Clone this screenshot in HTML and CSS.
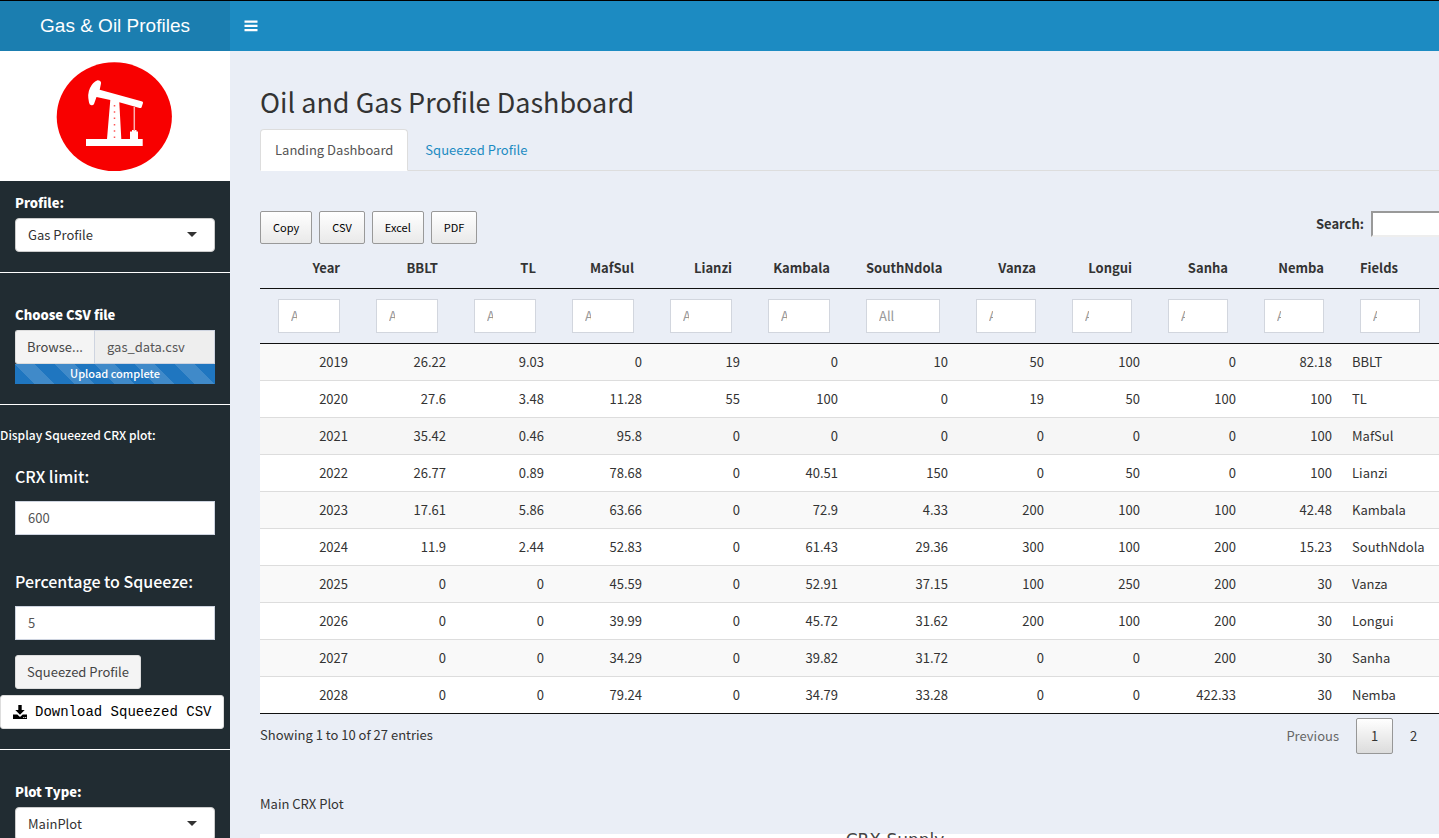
FILE: index.html
```html
<!DOCTYPE html>
<html lang="en">
<head>
<meta charset="utf-8">
<title>Gas &amp; Oil Profiles</title>
<link rel="stylesheet" href="styles.css">
</head>
<body>
<header class="header">
  <div class="brand">Gas &amp; Oil Profiles</div>
  <nav class="navbar">
    <button class="menu-toggle" type="button" aria-label="Toggle navigation">
      <svg width="14" height="12" viewBox="0 0 14 12"><path d="M0.500 0.500h13v2.300h-13zM0.500 4.800h13v2.300h-13zM0.500 9h13v2.300h-13z" fill="#fff"/></svg>
    </button>
  </nav>
</header>
<div class="shell">
  <aside class="sidebar">
    <div class="logo">
      <svg width="230" height="130" viewBox="0 0 230 130" role="img" aria-label="Oil pump">
        <ellipse cx="114.3" cy="65.7" rx="57.6" ry="54.4" fill="#f80000"/>
        <g fill="#fff">
          <path d="M97.500 29.300Q101.500 29.500 101 32.500L99.700 38.700L142.300 50.500Q143.300 51 143 52L141.600 56.200Q141 57.400 139.600 57L119.300 51.200L121.300 88H142.700V95H86V88H107L110.300 49L96.500 46L94 53Q93.200 54.400 91.500 54.200Q89.400 54 89 51.500Q87 43 90 37Q92.500 31.500 97.500 29.300Z"/>
          <path d="M132 79h4.500v1.500h1.500V89h-8v-8.500h2z"/>
        </g>
        <path d="M134.300 56v24" stroke="#fcb0b0" stroke-width="1.500"/>
        <path d="M114.500 54v35" stroke="#f55" stroke-width="1.500" stroke-dasharray="1.500 4.800"/>
      </svg>
    </div>
    <section class="panel">
      <div class="field">
        <label for="profile">Profile:</label>
        <div class="select"><select id="profile"><option>Gas Profile</option></select></div>
      </div>
    </section>
    <section class="panel panel-lower">
      <div class="field">
        <label for="csv">Choose CSV file</label>
        <div class="file">
          <button type="button" class="browse">Browse...</button>
          <input id="csv" type="text" value="gas_data.csv" readonly>
        </div>
        <div class="progress">Upload complete</div>
      </div>
    </section>
    <section class="panel squeeze">
      <p class="note">Display Squeezed CRX plot:</p>
      <div class="field number">
        <label class="big" for="limit">CRX limit:</label>
        <input id="limit" type="text" value="600">
      </div>
      <div class="field number second">
        <label class="big" for="percent">Percentage to Squeeze:</label>
        <input id="percent" type="text" value="5">
        <button type="button" class="action">Squeezed Profile</button>
      </div>
      <button type="button" class="download">
        <svg width="14" height="14" viewBox="0 0 14 14"><path d="M5.300 0h3.400v5h3L7 9.700 2.300 5h3zM0 9.500h4.300L7 12l2.700-2.500H14V14H0zM10.300 12v1h1v-1zM12.200 12v1h1v-1z" fill="#000" fill-rule="evenodd"/></svg>
        Download Squeezed CSV
      </button>
    </section>
    <section class="panel panel-lower">
      <div class="field">
        <label for="plot">Plot Type:</label>
        <div class="select"><select id="plot"><option>MainPlot</option></select></div>
      </div>
    </section>
  </aside>
  <main class="content">
    <h1>Oil and Gas Profile Dashboard</h1>
    <nav class="tabs">
      <a class="tab active" href="#landing">Landing Dashboard</a>
      <a class="tab" href="#squeezed">Squeezed Profile</a>
    </nav>
    <div class="toolbar">
      <div class="exports">
        <button type="button">Copy</button>
        <button type="button">CSV</button>
        <button type="button">Excel</button>
        <button type="button">PDF</button>
      </div>
      <div class="search">
        <label for="search">Search:</label>
        <input id="search" type="search">
      </div>
    </div>
    <table class="data">
      <colgroup><col span="6" class="c-wide"><col class="c-south"><col span="4" class="c-mid"><col></colgroup>
      <thead>
        <tr><th>Year</th><th>BBLT</th><th>TL</th><th>MafSul</th><th>Lianzi</th><th>Kambala</th><th>SouthNdola</th><th>Vanza</th><th>Longui</th><th>Sanha</th><th>Nemba</th><th>Fields</th></tr>
        <tr class="filters">
          <td><input placeholder="All" aria-label="Filter Year"></td><td><input placeholder="All" aria-label="Filter BBLT"></td><td><input placeholder="All" aria-label="Filter TL"></td><td><input placeholder="All" aria-label="Filter MafSul"></td><td><input placeholder="All" aria-label="Filter Lianzi"></td><td><input placeholder="All" aria-label="Filter Kambala"></td><td><input placeholder="All" aria-label="Filter SouthNdola"></td><td><input placeholder="All" aria-label="Filter Vanza"></td><td><input placeholder="All" aria-label="Filter Longui"></td><td><input placeholder="All" aria-label="Filter Sanha"></td><td><input placeholder="All" aria-label="Filter Nemba"></td><td><input placeholder="All" aria-label="Filter Fields"></td>
        </tr>
      </thead>
      <tbody>
        <tr><td>2019</td><td>26.22</td><td>9.03</td><td>0</td><td>19</td><td>0</td><td>10</td><td>50</td><td>100</td><td>0</td><td>82.18</td><td>BBLT</td></tr>
        <tr><td>2020</td><td>27.6</td><td>3.48</td><td>11.28</td><td>55</td><td>100</td><td>0</td><td>19</td><td>50</td><td>100</td><td>100</td><td>TL</td></tr>
        <tr class="current"><td>2021</td><td>35.42</td><td>0.46</td><td>95.8</td><td>0</td><td>0</td><td>0</td><td>0</td><td>0</td><td>0</td><td>100</td><td>MafSul</td></tr>
        <tr><td>2022</td><td>26.77</td><td>0.89</td><td>78.68</td><td>0</td><td>40.51</td><td>150</td><td>0</td><td>50</td><td>0</td><td>100</td><td>Lianzi</td></tr>
        <tr><td>2023</td><td>17.61</td><td>5.86</td><td>63.66</td><td>0</td><td>72.9</td><td>4.33</td><td>200</td><td>100</td><td>100</td><td>42.48</td><td>Kambala</td></tr>
        <tr><td>2024</td><td>11.9</td><td>2.44</td><td>52.83</td><td>0</td><td>61.43</td><td>29.36</td><td>300</td><td>100</td><td>200</td><td>15.23</td><td>SouthNdola</td></tr>
        <tr><td>2025</td><td>0</td><td>0</td><td>45.59</td><td>0</td><td>52.91</td><td>37.15</td><td>100</td><td>250</td><td>200</td><td>30</td><td>Vanza</td></tr>
        <tr><td>2026</td><td>0</td><td>0</td><td>39.99</td><td>0</td><td>45.72</td><td>31.62</td><td>200</td><td>100</td><td>200</td><td>30</td><td>Longui</td></tr>
        <tr><td>2027</td><td>0</td><td>0</td><td>34.29</td><td>0</td><td>39.82</td><td>31.72</td><td>0</td><td>0</td><td>200</td><td>30</td><td>Sanha</td></tr>
        <tr><td>2028</td><td>0</td><td>0</td><td>79.24</td><td>0</td><td>34.79</td><td>33.28</td><td>0</td><td>0</td><td>422.33</td><td>30</td><td>Nemba</td></tr>
      </tbody>
    </table>
    <div class="table-foot">
      <div class="info">Showing 1 to 10 of 27 entries</div>
      <div class="pager">
        <button type="button" class="prev" disabled>Previous</button>
        <button type="button" class="page current-page">1</button>
        <button type="button" class="page">2</button>
      </div>
    </div>
    <p class="caption">Main CRX Plot</p>
    <div class="plot"><div class="plot-title">CRX Supply</div></div>
  </main>
</div>
</body>
</html>
```
FILE: styles.css
```css
* { box-sizing: border-box; }

body {
  margin: 0;
  height: 100vh;
  overflow: hidden;
  display: flex;
  flex-direction: column;
  border-top: 1px solid #000;
  background: #eaeef6;
  color: #333;
  font: 13px/20px "Noto Sans CJK SC", "Noto Sans", sans-serif;
}

button, input, select { font: inherit; color: inherit; margin: 0; }
p, h1 { margin: 0; }

.header { display: flex; flex: none; height: 50px; }
.brand {
  width: 230px;
  background: #1b7eb0;
  color: #fff;
  font: 19px/50px "Liberation Sans", Arial, sans-serif;
  text-align: center;
}
.navbar { flex: 1; display: flex; background: #1c8bc2; }
.menu-toggle {
  display: flex;
  align-items: center;
  padding: 0 14px;
  border: 0;
  background: none;
}

.shell { flex: 1; display: flex; min-height: 0; overflow: hidden; }

.sidebar { flex: none; width: 230px; background: #212c32; color: #fff; }
.logo { background: #fff; }
.logo svg { display: block; }
.panel { padding: 12px 0 20px; border-bottom: 1px solid #fff; }
.panel-lower { padding-top: 32px; }
.field { padding: 0 15px; }
.field label { display: block; margin-bottom: 5px; font-weight: 900; }
.field .big { margin-bottom: 15px; font-size: 16px; font-weight: 500; }
.field input {
  display: block;
  width: 100%;
  height: 34px;
  padding: 5px 12px 7px;
  border: 1px solid #ced4e0;
  background: #fff;
  color: #555;
}

.select { position: relative; }
.select::after {
  content: "";
  position: absolute;
  right: 18px;
  top: 14px;
  border: 5px solid transparent;
  border-top-color: #333;
  border-bottom: 0;
  pointer-events: none;
}
.select select {
  display: block;
  width: 100%;
  height: 34px;
  padding: 0 12px;
  border: 1px solid #ccc;
  border-radius: 4px;
  background: #fff;
  color: #333;
  appearance: none;
}

.file { display: flex; }
.browse {
  flex: none;
  width: 79px;
  height: 34px;
  padding: 0;
  border: 1px solid #ddd;
  border-right: 0;
  border-radius: 3px 0 0 3px;
  background: #f4f4f4;
  color: #444;
}
.file input { flex: 1; min-width: 0; background: #eee; }
.progress {
  height: 20px;
  background: #1f76c0 linear-gradient(45deg, rgba(255, 255, 255, .15) 25%, transparent 25%, transparent 50%, rgba(255, 255, 255, .15) 50%, rgba(255, 255, 255, .15) 75%, transparent 75%) 0 0 / 40px 40px;
  font-size: 11px;
  font-weight: 500;
  line-height: 18px;
  text-align: center;
}

.squeeze { padding-top: 20px; }
.note { margin-bottom: 21px; font-size: 12px; font-weight: 500; }
.second { margin: 36px 0 6px; }
.action {
  height: 34px;
  margin-top: 15px;
  padding: 0 11px;
  border: 1px solid #ddd;
  border-radius: 3px;
  background: #f4f4f4;
  color: #444;
}
.download {
  display: flex;
  align-items: center;
  gap: 8px;
  height: 34px;
  padding: 0 12px;
  border: 1px solid #ddd;
  border-radius: 3px;
  background: #fff;
  color: #000;
  font-family: "Liberation Mono", "Courier New", monospace;
  font-size: 14px;
  white-space: nowrap;
}

.content { flex: 1; min-width: 0; padding: 34px 0 0 30px; margin-right: -91px; }
h1 { font-size: 27px; line-height: 33px; font-weight: normal; }
.tabs {
  display: flex;
  gap: 2px;
  margin-top: 11px;
  border-bottom: 1px solid #ddd;
}
.tab {
  margin-bottom: -1px;
  padding: 10px 14px;
  border: 1px solid transparent;
  border-radius: 4px 4px 0 0;
  color: #1c8bc2;
  text-decoration: none;
}
.tab.active { border-color: #ddd #ddd #fff; background: #fff; color: #555; }

.toolbar {
  display: flex;
  justify-content: space-between;
  align-items: flex-start;
  margin-top: 40px;
}
.exports { display: flex; gap: 7px; }
.exports button {
  height: 33px;
  padding: 0 12px 2px;
  border: 1px solid #999;
  border-radius: 2px;
  background: linear-gradient(#fff, #e9e9e9);
  color: #000;
  font-size: 11px;
}
.search { display: flex; align-items: center; gap: 7px; font-weight: bold; }
.search input {
  width: 159px;
  height: 26px;
  border: 2px solid;
  border-color: #999 #eee #eee #999;
  border-radius: 0;
  background: #fff;
  appearance: none;
}

.data {
  width: 100%;
  margin-top: 4px;
  table-layout: fixed;
  border-collapse: separate;
  border-spacing: 0;
  border-bottom: 1px solid #111;
}
.c-wide { width: 98px; }
.c-south { width: 110px; }
.c-mid { width: 96px; }
.data th, .data td { text-align: right; }
.data th:last-child, .data td:last-child { text-align: left; }
.data th { padding: 10px 18px; border-bottom: 1px solid #111; }
.data .filters td { padding: 10px 18px; border-bottom: 1px solid #111; }
.filters input {
  display: block;
  width: 100%;
  height: 34px;
  padding: 5px 42px 7px 12px;
  border: 1px solid #d2d6de;
  background: #fff;
}
.filters td:last-child input { width: 60px; }
.filters input::placeholder { color: #999; }
.data tbody td { padding: 8px 10px; border-top: 1px solid #ddd; background: #fff; }
.data tbody tr:first-child td { border-top: 0; }
.data tbody tr:nth-child(odd) td { background: #f9f9f9; }
.data tbody tr.current td { background: #f6f6f6; }

.table-foot { display: flex; justify-content: space-between; padding-top: 4px; }
.info { padding-top: 7px; }
.pager { display: flex; gap: 2px; margin-right: 98px; }
.pager button {
  height: 36px;
  padding: 0 14px;
  border: 1px solid transparent;
  border-radius: 2px;
  background: none;
}
.pager .prev { color: #666; }
.pager .page { width: 37px; }
.pager .current-page { border-color: #979797; background: linear-gradient(#fff, #dcdcdc); }

.caption { margin-top: 40px; }
.plot { margin-top: 20px; height: 400px; background: #fff; }
.plot-title {
  color: #444;
  font: 17px/13px "DejaVu Sans", Verdana, sans-serif;
  text-align: center;
}
```
